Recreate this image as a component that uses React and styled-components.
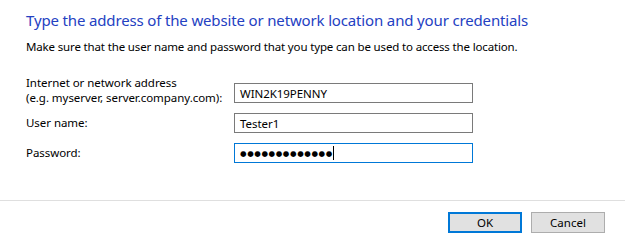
import React from 'react'
import styled, { createGlobalStyle } from 'styled-components'

const GlobalStyle = createGlobalStyle`
  html, body {
    margin: 0;
    padding: 0;
    background: #ffffff;
  }
  body {
    font-family: "Noto Sans", "Open Sans", "DejaVu Sans", sans-serif;
    color: #000000;
  }
`

const Dialog = styled.div`
  width: 625px;
  height: 244px;
  display: flex;
  flex-direction: column;
  background: #ffffff;
`

const Content = styled.div`
  padding: 9px 26px 0 26px;
  flex: 1;
`

const Title = styled.h1`
  margin: 0;
  font-size: 15px;
  font-weight: 400;
  line-height: 22px;
  color: #2441c2;
  letter-spacing: -0.15px;
`

const Intro = styled.p`
  margin: 8px 0 0 0;
  font-size: 11.5px;
  line-height: 16px;
  letter-spacing: -0.15px;
`

const Form = styled.div`
  display: grid;
  grid-template-columns: 208px 239px;
  row-gap: 10px;
  margin-top: 20px;
  align-items: end;
`

const Label = styled.div`
  font-size: 11.5px;
  line-height: 15px;
  padding-bottom: ${p => (p.$low ? '0' : '3px')};
  margin-bottom: ${p => (p.$low ? '-2px' : '0')};
  letter-spacing: -0.05px;
`

const Field = styled.div`
  height: 20px;
  box-sizing: border-box;
  border: 1px solid ${p => (p.$focused ? '#0078d7' : '#7a7a7a')};
  padding: 0 5px;
  display: flex;
  align-items: center;
  font-size: 11.5px;
  letter-spacing: -0.05px;
`

const Dots = styled.span`
  font-family: "DejaVu Sans", sans-serif;
  font-size: 7.5px;
  letter-spacing: 0.6px;
`

const Caret = styled.span`
  display: inline-block;
  width: 1px;
  height: 14px;
  background: #000000;
`

const Footer = styled.div`
  border-top: 1px solid #dfdfdf;
  height: 44px;
  box-sizing: border-box;
  display: flex;
  justify-content: flex-end;
  align-items: flex-start;
  gap: 9px;
  padding: 11px 20px 0 0;
`

const Button = styled.button`
  width: 74px;
  height: 21px;
  box-sizing: border-box;
  background: #e1e1e1;
  border: ${p => (p.$default ? '2px solid #0078d7' : '1px solid #adadad')};
  font-family: "Noto Sans", "Open Sans", sans-serif;
  font-size: 11.5px;
  color: #000000;
  padding: 0;
  line-height: 1;
`

export default function App() {
  return (
    <Dialog>
      <GlobalStyle />
      <Content>
        <Title>Type the address of the website or network location and your credentials</Title>
        <Intro>Make sure that the user name and password that you type can be used to access the location.</Intro>
        <Form>
          <Label $low>
            Internet or network address
            <br />
            (e.g. myserver, server.company.com):
          </Label>
          <Field>WIN2K19PENNY</Field>
          <Label>User name:</Label>
          <Field>Tester1</Field>
          <Label>Password:</Label>
          <Field $focused>
            <Dots>{'●●●●●●●●●●●●●'}</Dots>
            <Caret />
          </Field>
        </Form>
      </Content>
      <Footer>
        <Button $default>OK</Button>
        <Button>Cancel</Button>
      </Footer>
    </Dialog>
  )
}
